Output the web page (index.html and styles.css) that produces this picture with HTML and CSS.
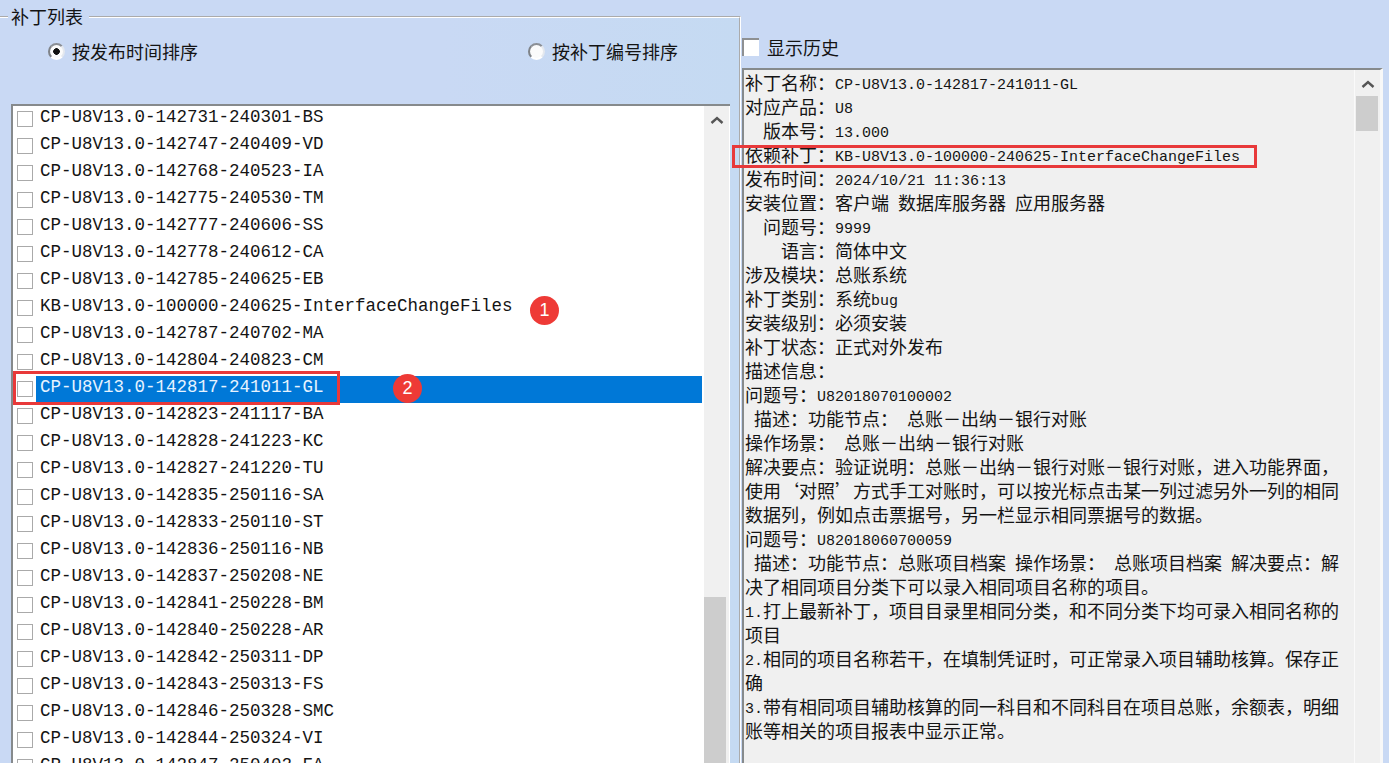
FILE: index.html
```html
<!DOCTYPE html>
<html lang="zh-CN">
<head>
<meta charset="utf-8">
<title>补丁列表</title>
<link rel="stylesheet" href="styles.css">
</head>
<body>
<div class="page">
  <fieldset class="panel">
    <legend class="panel-title">补丁列表</legend>
    <div class="sort">
      <label class="opt"><span class="radio radio-on"></span>按发布时间排序</label>
      <label class="opt"><span class="radio"></span>按补丁编号排序</label>
    </div>
    <div class="list">
      <ul class="rows">
        <li class="row"><span class="check"></span><span class="name">CP-U8V13.0-142731-240301-BS</span></li>
        <li class="row"><span class="check"></span><span class="name">CP-U8V13.0-142747-240409-VD</span></li>
        <li class="row"><span class="check"></span><span class="name">CP-U8V13.0-142768-240523-IA</span></li>
        <li class="row"><span class="check"></span><span class="name">CP-U8V13.0-142775-240530-TM</span></li>
        <li class="row"><span class="check"></span><span class="name">CP-U8V13.0-142777-240606-SS</span></li>
        <li class="row"><span class="check"></span><span class="name">CP-U8V13.0-142778-240612-CA</span></li>
        <li class="row"><span class="check"></span><span class="name">CP-U8V13.0-142785-240625-EB</span></li>
        <li class="row"><span class="check"></span><span class="name">KB-U8V13.0-100000-240625-InterfaceChangeFiles</span></li>
        <li class="row"><span class="check"></span><span class="name">CP-U8V13.0-142787-240702-MA</span></li>
        <li class="row"><span class="check"></span><span class="name">CP-U8V13.0-142804-240823-CM</span></li>
        <li class="row row-selected"><span class="check"></span><span class="name">CP-U8V13.0-142817-241011-GL</span></li>
        <li class="row"><span class="check"></span><span class="name">CP-U8V13.0-142823-241117-BA</span></li>
        <li class="row"><span class="check"></span><span class="name">CP-U8V13.0-142828-241223-KC</span></li>
        <li class="row"><span class="check"></span><span class="name">CP-U8V13.0-142827-241220-TU</span></li>
        <li class="row"><span class="check"></span><span class="name">CP-U8V13.0-142835-250116-SA</span></li>
        <li class="row"><span class="check"></span><span class="name">CP-U8V13.0-142833-250110-ST</span></li>
        <li class="row"><span class="check"></span><span class="name">CP-U8V13.0-142836-250116-NB</span></li>
        <li class="row"><span class="check"></span><span class="name">CP-U8V13.0-142837-250208-NE</span></li>
        <li class="row"><span class="check"></span><span class="name">CP-U8V13.0-142841-250228-BM</span></li>
        <li class="row"><span class="check"></span><span class="name">CP-U8V13.0-142840-250228-AR</span></li>
        <li class="row"><span class="check"></span><span class="name">CP-U8V13.0-142842-250311-DP</span></li>
        <li class="row"><span class="check"></span><span class="name">CP-U8V13.0-142843-250313-FS</span></li>
        <li class="row"><span class="check"></span><span class="name">CP-U8V13.0-142846-250328-SMC</span></li>
        <li class="row"><span class="check"></span><span class="name">CP-U8V13.0-142844-250324-VI</span></li>
        <li class="row"><span class="check"></span><span class="name">CP-U8V13.0-142847-250402-FA</span></li>
      </ul>
      <div class="scroll scroll-list">
        <svg class="chev" width="16" height="10" viewBox="0 0 16 10"><path d="M2.5 8 8 3l5.500 5" fill="none" stroke="#555" stroke-width="2.400"/></svg>
        <div class="thumb thumb-list"></div>
      </div>
    </div>
  </fieldset>

  <section class="detail">
    <label class="history"><span class="check check-history"></span>显示历史</label>
    <div class="info">
      <div class="lines">
        <div class="line">补丁名称：<span class="m">CP-U8V13.0-142817-241011-GL</span></div>
        <div class="line">对应产品：<span class="m">U8</span></div>
        <div class="line">　版本号：<span class="m">13.000</span></div>
        <div class="line">依赖补丁：<span class="m">KB-U8V13.0-100000-240625-InterfaceChangeFiles</span></div>
        <div class="line">发布时间：<span class="m">2024/10/21 11:36:13</span></div>
        <div class="line">安装位置：客户端<span class="m"> </span>数据库服务器<span class="m"> </span>应用服务器</div>
        <div class="line">　问题号：<span class="m">9999</span></div>
        <div class="line">　　语言：简体中文</div>
        <div class="line">涉及模块：总账系统</div>
        <div class="line">补丁类别：系统<span class="m">bug</span></div>
        <div class="line">安装级别：必须安装</div>
        <div class="line">补丁状态：正式对外发布</div>
        <div class="line">描述信息：</div>
        <div class="line">问题号：<span class="m">U82018070100002</span></div>
        <div class="line"><span class="m"> </span>描述：功能节点：<span class="m"> </span>总账－出纳－银行对账</div>
        <div class="line">操作场景：<span class="m"> </span>总账－出纳－银行对账</div>
        <div class="line">解决要点：验证说明：总账－出纳－银行对账－银行对账，进入功能界面，</div>
        <div class="line">使用‘对照’方式手工对账时，可以按光标点击某一列过滤另外一列的相同</div>
        <div class="line">数据列，例如点击票据号，另一栏显示相同票据号的数据。</div>
        <div class="line">问题号：<span class="m">U82018060700059</span></div>
        <div class="line"><span class="m"> </span>描述：功能节点：总账项目档案<span class="m"> </span>操作场景：<span class="m"> </span>总账项目档案<span class="m"> </span>解决要点：解</div>
        <div class="line">决了相同项目分类下可以录入相同项目名称的项目。</div>
        <div class="line"><span class="m">1.</span>打上最新补丁，项目目录里相同分类，和不同分类下均可录入相同名称的</div>
        <div class="line">项目</div>
        <div class="line"><span class="m">2.</span>相同的项目名称若干，在填制凭证时，可正常录入项目辅助核算。保存正</div>
        <div class="line">确</div>
        <div class="line"><span class="m">3.</span>带有相同项目辅助核算的同一科目和不同科目在项目总账，余额表，明细</div>
        <div class="line">账等相关的项目报表中显示正常。</div>
      </div>
      <div class="scroll scroll-info">
        <svg class="chev" width="16" height="10" viewBox="0 0 16 10"><path d="M2.5 8 8 3l5.500 5" fill="none" stroke="#555" stroke-width="2.400"/></svg>
        <div class="thumb thumb-info"></div>
      </div>
    </div>
  </section>

  <div class="mark mark-row"></div>
  <div class="mark mark-dep"></div>
  <div class="badge badge-one">1</div>
  <div class="badge badge-two">2</div>
</div>
</body>
</html>
```

FILE: styles.css
```css
* { box-sizing: border-box; }

html, body {
  margin: 0;
  padding: 0;
  height: 763px;
  overflow: hidden;
}

body {
  background: #c9d9f4;
  color: #141414;
  font-family: "Noto Sans CJK SC", "Liberation Sans", sans-serif;
  font-size: 18px;
  line-height: 24px;
}

.page {
  position: relative;
  display: flex;
  width: 1389px;
  height: 763px;
  overflow: hidden;
}

.panel {
  flex: none;
  width: 741px;
  height: 758px;
  min-width: 0;
  margin: 5px 0 0;
  padding: 0;
  border-style: groove;
  border-color: #fff;
  border-width: 2px 2px 0 0;
  background: linear-gradient(90deg, #c9d9f4 60%, #c5daf2);
}

.panel-title {
  margin-left: 8px;
  padding: 0 6px 0 3px;
  height: 24px;
  line-height: 22px;
}

.sort {
  display: flex;
  height: 75px;
  padding: 10px 0 0 48px;
}

.opt {
  display: flex;
  align-items: center;
  gap: 7px;
  height: 24px;
  flex: none;
}

.opt:first-child { width: 480px; }

.radio {
  display: block;
  flex: none;
  width: 17px;
  height: 17px;
  border-radius: 50%;
  border: 2px solid;
  border-color: #8b8f95 #e4e8ee #fff #7f8388;
  background: #fbfbfb;
}

.radio-on {
  background: radial-gradient(circle, #111 0 3px, #fbfbfb 3.6px);
}

.list {
  display: flex;
  width: 719px;
  height: 659px;
  margin-left: 11px;
  overflow: hidden;
  border-top: 2px solid #868a8c;
  border-left: 2px solid #868a8c;
  background: #fff;
}

.rows {
  flex: none;
  width: 689px;
  margin: 0;
  padding: 0;
  list-style: none;
}

.row {
  display: flex;
  height: 27px;
  font-family: "Liberation Mono", monospace;
  font-size: 17.5px;
  line-height: 21px;
  white-space: pre;
}

.check {
  display: block;
  flex: none;
  width: 16px;
  height: 16px;
  margin: 5px 3px 0 4px;
  border: 1.500px solid #aaa;
  background: #fff;
}

.name {
  flex: 1;
  padding: 1px 0 0 4px;
}

.row-selected .name {
  background: #0078d7;
  color: #e6f3ff;
}

.scroll {
  display: flex;
  flex-direction: column;
  flex: none;
  background: #f0f0f0;
}

.scroll-list {
  width: 25px;
  margin-left: 2px;
  padding-top: 9px;
}

.chev {
  display: block;
  flex: none;
  align-self: center;
}

.thumb { background: #cdcdcd; }

.thumb-list {
  width: 22px;
  height: 166px;
  margin-top: auto;
}

.detail {
  flex: none;
  width: 642px;
  margin-left: 1px;
  display: flex;
  flex-direction: column;
}

.history {
  display: flex;
  align-items: center;
  gap: 8px;
  height: 68px;
  padding-top: 31px;
  padding-bottom: 5px;
}

.check-history {
  width: 17px;
  height: 18px;
  margin: 0;
  border-width: 2px 0 0 2px;
  border-color: #8e9092;
}

.info {
  display: flex;
  flex: 1;
  min-height: 0;
  width: 641px;
  border-top: 2px solid #868a8c;
  border-left: 2px solid #868a8c;
  border-right: 3px solid #f8f8f8;
  background: #f0f0f0;
}

.lines {
  flex: 1;
  min-width: 0;
  padding: 0 0 0 1px;
  overflow: hidden;
}

.line {
  height: 24px;
  white-space: pre;
}

.m {
  font-family: "Liberation Mono", monospace;
  font-size: 15px;
  vertical-align: 1px;
}

.scroll-info {
  width: 26px;
  border-left: 1px solid #fafafa;
  padding-top: 9px;
}

.thumb-info {
  width: 22px;
  height: 35px;
  margin: 7px 0 0 1px;
}

.mark {
  position: absolute;
  border: 3px solid #e8393a;
}

.mark-row {
  left: 13px;
  top: 371px;
  width: 327px;
  height: 34px;
}

.mark-dep {
  left: 732px;
  top: 145px;
  width: 525px;
  height: 23px;
}

.badge {
  position: absolute;
  width: 29px;
  height: 29px;
  border-radius: 50%;
  background: #ee3a36;
  color: #fff;
  font-family: "Liberation Sans", sans-serif;
  font-size: 18px;
  line-height: 29px;
  text-align: center;
}

.badge-one { left: 530px; top: 296px; }
.badge-two { left: 393px; top: 374px; }
```
